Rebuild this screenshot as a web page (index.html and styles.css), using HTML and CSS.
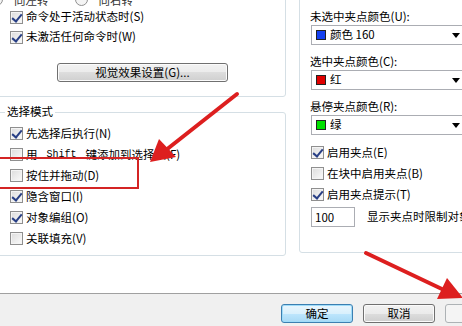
FILE: index.html
```html
<!DOCTYPE html>
<html lang="zh-CN">
<head>
    <meta charset="UTF-8">
    <title>选择集</title>
    <link rel="stylesheet" href="styles.css">
</head>
<body>
    <div class="dialog">
        <div class="dialog__body">
            <div class="column column--left">
                <div class="group group--top">
                    <div class="turn">
                        <span class="radio"></span><span class="turn__label">向左转</span>
                        <span class="radio radio--second"></span><span class="turn__label">向右转</span>
                    </div>
                    <label class="check check--tight"><span class="box box--on"></span>命令处于活动状态时(S)</label>
                    <label class="check check--tight"><span class="box box--on"></span>未激活任何命令时(W)</label>
                    <button class="btn btn--wide">视觉效果设置(G)...</button>
                </div>
                <div class="group group--select">
                    <div class="group__title">选择模式</div>
                    <div class="group__list">
                        <label class="check"><span class="box box--on"></span>先选择后执行(N)</label>
                        <label class="check"><span class="box"></span>用<span class="mono"> Shift </span>键添加到选择集(F)</label>
                        <label class="check"><span class="box"></span>按住并拖动(D)</label>
                        <label class="check"><span class="box box--on"></span>隐含窗口(I)</label>
                        <label class="check"><span class="box box--on"></span>对象编组(O)</label>
                        <label class="check"><span class="box"></span>关联填充(V)</label>
                    </div>
                </div>
            </div>
            <div class="column column--right">
                <div class="group group--grips">
                    <div class="field__label">未选中夹点颜色(U):</div>
                    <div class="combo"><span class="swatch swatch--blue"></span>颜色 160<span class="combo__arrow"></span></div>
                    <div class="field__label">选中夹点颜色(C):</div>
                    <div class="combo"><span class="swatch swatch--red"></span>红<span class="combo__arrow"></span></div>
                    <div class="field__label">悬停夹点颜色(R):</div>
                    <div class="combo"><span class="swatch swatch--green"></span>绿<span class="combo__arrow"></span></div>
                    <div class="group__list group__list--grips">
                        <label class="check"><span class="box box--on"></span>启用夹点(E)</label>
                        <label class="check"><span class="box"></span>在块中启用夹点(B)</label>
                        <label class="check"><span class="box box--on"></span>启用夹点提示(T)</label>
                    </div>
                    <div class="limit">
                        <span class="limit__input">100</span>
                        <span class="limit__text">显示夹点时限制对象选择</span>
                    </div>
                </div>
            </div>
        </div>
        <div class="dialog__footer">
            <button class="btn btn--default">确定</button>
            <button class="btn">取消</button>
            <button class="btn" disabled>应用(A)</button>
        </div>
        <!-- red annotations drawn over the dialog -->
        <div class="mark-box"></div>
        <svg class="marks" width="462" height="326" viewBox="0 0 462 326">
            <line x1="237" y1="94" x2="166" y2="150" stroke="#dd1f1f" stroke-width="4" stroke-linecap="round"/>
            <polygon points="150,162 159,139 176,157" fill="#dd1f1f"/>
            <line x1="366" y1="253" x2="444" y2="290" stroke="#dd1f1f" stroke-width="4" stroke-linecap="round"/>
            <polygon points="463,298 447,278 437,299" fill="#dd1f1f"/>
        </svg>
    </div>
</body>
</html>
```

FILE: styles.css
```css
* {
    box-sizing: border-box;
}
body {
    margin: 0;
    font: 11.5px/1.2 "Noto Sans CJK SC", "Liberation Sans", sans-serif;
    color: #000;
    background: #fff;
}
.dialog {
    position: relative;
    width: 462px;
    height: 326px;
    overflow: hidden;
}
.dialog__body {
    height: 294px;
    display: flex;
    gap: 13px;
    border-bottom: 1px solid #a0a0a0;
    background: #fff;
}
.column {
    flex: none;
}
.column--left {
    width: 298px;
    margin-left: -12px;
}
.column--right {
    width: 180px;
}
.group {
    border: 1px solid #d5dfe5;
    border-radius: 3px;
    padding-left: 21px;
}
.group--top {
    margin-top: -27px;
    padding-bottom: 14px;
}
.turn {
    height: 33px;
    display: flex;
    align-items: flex-end;
    margin-left: -20px;
    line-height: 14px;
    color: #333;
}
.radio {
    width: 13px;
    height: 13px;
    border: 1px solid #8f8f8f;
    border-radius: 50%;
    background: #f4f4f4;
    margin-bottom: 1px;
}
.turn__label {
    margin-left: 11px;
}
.radio--second {
    margin-left: 26px;
}
.check {
    display: flex;
    align-items: center;
    height: 21px;
    gap: 3px;
    white-space: nowrap;
}
.check--tight {
    height: 20px;
}
.box {
    flex: none;
    width: 13px;
    height: 13px;
    border: 1px solid #8f8f8f;
    background: linear-gradient(135deg, #dcdcdc, #fbfbfb);
    box-shadow: inset 0 0 0 1px #f4f4f4;
}
.box--on::after {
    content: "";
    display: block;
    width: 4px;
    height: 8px;
    margin: 0 0 0 3px;
    border: solid #283f85;
    border-width: 0 2px 2px 0;
    transform: rotate(40deg);
}
.mono {
    font-family: "Liberation Mono", monospace;
    font-size: 10px;
    white-space: pre;
}
.btn {
    width: 72px;
    height: 20px;
    padding: 0;
    font: inherit;
    color: #000;
    border: 1px solid #707070;
    border-radius: 3px;
    background: linear-gradient(#f2f2f2, #ebebeb 50%, #dddddd 50%, #cfcfcf);
    box-shadow: inset 0 0 0 1px #fbfbfb;
}
.btn--wide {
    display: block;
    width: 171px;
    height: 19px;
    margin: 16px 0 0 47px;
}
.btn--default {
    border-color: #3c7fb1;
    background: linear-gradient(#eaf6fd, #d9f0fc 50%, #bee6fd 50%, #a7d9f5);
    box-shadow: inset 0 0 0 1px #9fdcf9;
}
.btn:disabled {
    color: #9a9a9a;
    border-color: #adb2b5;
    background: #f4f4f4;
    box-shadow: none;
}
.group--select {
    margin-top: 15px;
    padding-bottom: 6px;
}
.group__title {
    width: fit-content;
    margin: -10px 0 0 -5px;
    padding: 0 2px;
    line-height: 16px;
    background: #fff;
}
.group__list {
    margin-top: 4px;
}
.group--grips {
    margin-top: -27px;
    padding: 33px 0 25px 11px;
}
.field__label {
    line-height: 18px;
    margin-left: -1px;
}
.combo {
    width: 162px;
    height: 20px;
    display: flex;
    align-items: center;
    gap: 4px;
    padding-left: 4px;
    margin-bottom: 7px;
    border: 1px solid #abadb3;
    white-space: nowrap;
}
.swatch {
    flex: none;
    width: 10px;
    height: 10px;
    border: 1px solid #222;
}
.swatch--blue {
    background: #1440f0;
}
.swatch--red {
    background: #e00000;
}
.swatch--green {
    background: #00e000;
}
.combo__arrow {
    margin-left: auto;
    margin-right: 12px;
    width: 0;
    height: 0;
    border-left: 4px solid transparent;
    border-right: 4px solid transparent;
    border-top: 5px solid #000;
}
.group__list--grips {
    margin-top: 3px;
}
.limit {
    display: flex;
    align-items: center;
    gap: 12px;
    margin-top: 2px;
    white-space: nowrap;
}
.limit__input {
    flex: none;
    width: 44px;
    height: 20px;
    line-height: 18px;
    padding-left: 3px;
    border: 1px solid #abadb3;
}
.dialog__footer {
    height: 32px;
    display: flex;
    gap: 10px;
    padding: 10px 0 0 281px;
    background: #f0f0f0;
}
.dialog__footer .btn {
    flex: none;
    height: 19px;
}
.mark-box {
    position: absolute;
    left: -5px;
    top: 157px;
    width: 144px;
    height: 32px;
    border: 2px solid #d42424;
}
.marks {
    position: absolute;
    left: 0;
    top: 0;
    pointer-events: none;
}
```
